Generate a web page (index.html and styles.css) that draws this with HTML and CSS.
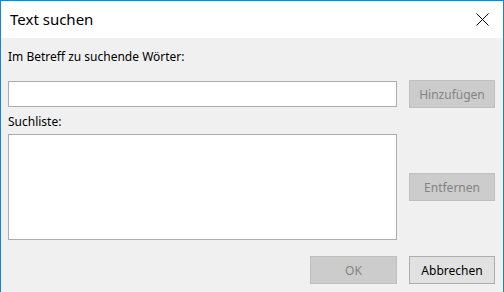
FILE: index.html
```html
<!DOCTYPE html>
<html lang="de">
<head>
<meta charset="utf-8">
<title>Text suchen</title>
<link rel="stylesheet" href="styles.css">
</head>
<body>
<div class="window">
  <div class="titlebar">
    <span class="title">Text suchen</span>
    <span class="close">
      <svg width="13" height="13" viewBox="0 0 13 13"><path d="M0.5 0.5 L12.5 12.5 M12.5 0.5 L0.5 12.5" stroke="#000" stroke-width="1" fill="none"/></svg>
    </span>
  </div>
  <div class="content">
    <div class="label first">Im Betreff zu suchende Wörter:</div>
    <div class="input"></div>
    <button class="btn disabled add">Hinzufügen</button>
    <div class="label second">Suchliste:</div>
    <div class="listbox"></div>
    <button class="btn disabled remove">Entfernen</button>
    <button class="btn disabled ok">OK</button>
    <button class="btn cancel">Abbrechen</button>
  </div>
</div>
</body>
</html>
```
FILE: styles.css
```css
html, body {
  margin: 0;
  padding: 0;
}
body {
  font-family: "Noto Sans", "Open Sans", sans-serif;
  font-size: 12px;
  color: #000;
  background: #f0f0f0;
}
.window {
  width: 502px;
  height: 291px;
  border: 1px solid #1883d7;
  border-bottom: none;
  background: #f0f0f0;
}
.titlebar {
  height: 37px;
  background: #fff;
  display: flex;
  align-items: center;
  justify-content: space-between;
  padding: 0 14px 0 9px;
}
.title {
  font-size: 15px;
  line-height: 20px;
  margin-top: -1px;
}
.close {
  display: flex;
  width: 13px;
  height: 13px;
}
.content {
  display: grid;
  grid-template-columns: 389px 86px;
  column-gap: 12px;
  padding: 0 7px 0 7px;
}
.label {
  grid-column: 1;
  line-height: 16px;
}
.first {
  margin-top: 11px;
  margin-bottom: 15px;
}
.input {
  grid-column: 1;
  height: 24px;
  margin-top: 1px;
  border: 1px solid #adadad;
  background: #fff;
}
.btn {
  font-family: inherit;
  font-size: 12px;
  height: 28px;
  padding: 0;
  margin: 0;
  border: 1px solid #adadad;
  background: #e1e1e1;
  color: #000;
}
.disabled {
  background: #cccccc;
  border-color: #bfbfbf;
  color: #838383;
}
.add {
  grid-column: 2;
  width: 86px;
}
.second {
  margin-top: 6px;
  margin-bottom: 4px;
}
.listbox {
  grid-column: 1;
  height: 104px;
  border: 1px solid #adadad;
  background: #fff;
}
.remove {
  grid-column: 2;
  align-self: center;
  width: 86px;
}
.ok {
  grid-column: 1;
  justify-self: end;
  width: 87px;
  margin-top: 16px;
}
.cancel {
  grid-column: 2;
  width: 86px;
  margin-top: 16px;
}
```
